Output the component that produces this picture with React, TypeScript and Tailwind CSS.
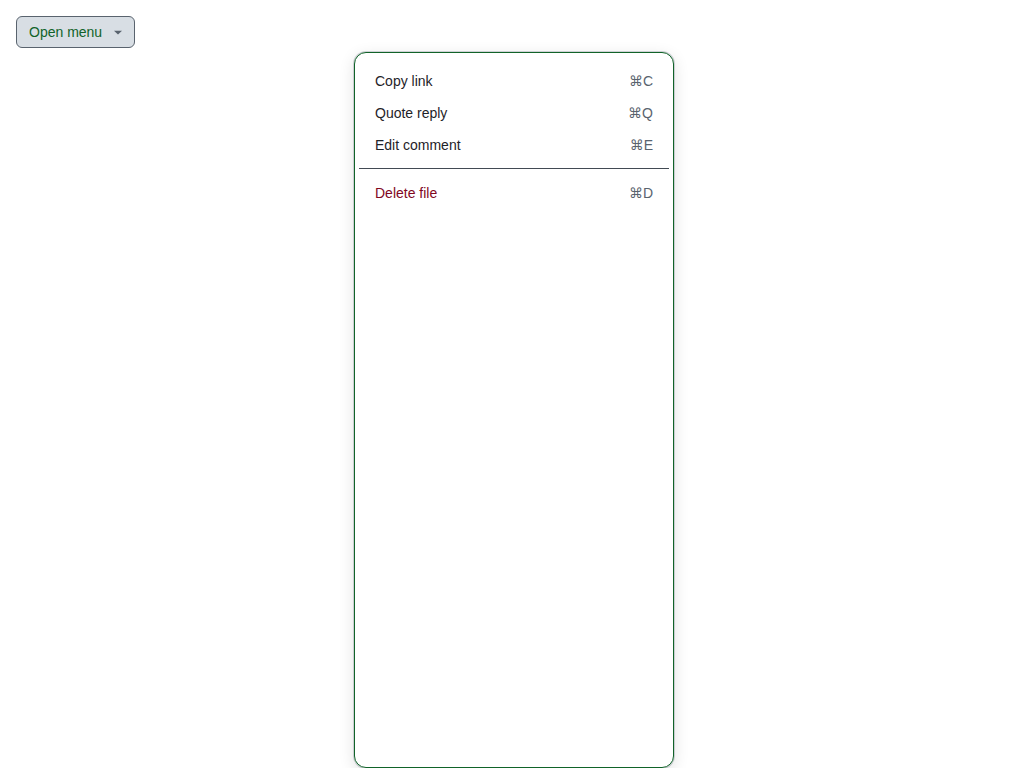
import React from "react";

const items = [
  { label: "Copy link", key: "⌘C" },
  { label: "Quote reply", key: "⌘Q" },
  { label: "Edit comment", key: "⌘E" },
];

export default function App() {
  return (
    <div
      className="relative w-[1012px] h-[768px] bg-white overflow-hidden"
      style={{ fontFamily: '"Liberation Sans", Arial, sans-serif' }}
    >
      <div className="p-4">
        <button className="flex items-center h-8 pl-3 pr-[11px] gap-[11px] rounded-md border border-[#59636e] bg-[#d8dee4] text-[#116329] text-sm">
          <span>Open menu</span>
          <svg width="10" height="10" viewBox="0 0 10 10">
            <path d="M1 3.8 L5 7.4 L9 3.8 Z" fill="#59636e" />
          </svg>
        </button>
      </div>
      <div className="absolute left-[354px] top-[52px] w-[320px] h-[716px] rounded-xl border border-[#116329] bg-white shadow-[0_0_0_1px_rgba(130,140,150,0.35),0_4px_16px_rgba(0,0,0,0.12)] p-1 pt-3 text-sm">
        {items.map((it) => (
          <div key={it.label} className="flex items-center justify-between h-8 px-4">
            <span className="text-[#1f2328]">{it.label}</span>
            <span className="text-[#59636e]" style={{ fontFamily: '"DejaVu Sans", "Liberation Sans", sans-serif' }}>
              <span>{it.key[0]}</span>
              <span style={{ fontFamily: '"Liberation Sans", Arial, sans-serif' }}>{it.key.slice(1)}</span>
            </span>
          </div>
        ))}
        <div className="my-[7px] h-px bg-[#424a53]" />
        <div className="flex items-center justify-between h-8 px-4 mt-[8px]">
          <span className="text-[#82071e]">Delete file</span>
          <span className="text-[#59636e]" style={{ fontFamily: '"DejaVu Sans", "Liberation Sans", sans-serif' }}>
            <span>⌘</span>
            <span style={{ fontFamily: '"Liberation Sans", Arial, sans-serif' }}>D</span>
          </span>
        </div>
      </div>
    </div>
  );
}
